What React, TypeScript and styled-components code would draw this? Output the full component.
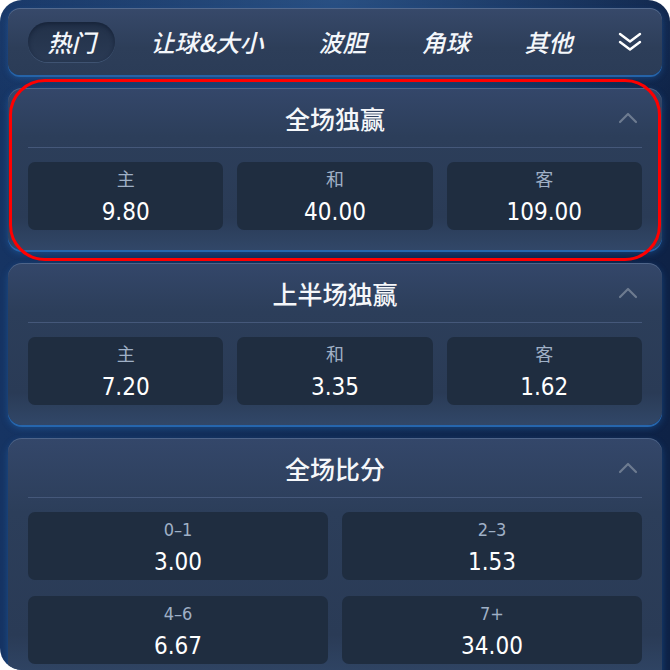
import styled, { createGlobalStyle } from 'styled-components';

const GlobalStyle = createGlobalStyle`
  html, body {
    margin: 0;
    padding: 0;
    background: #ffffff;
  }
  * {
    box-sizing: border-box;
  }
`;

const cjk = `"Noto Sans CJK SC", "Noto Sans", sans-serif`;
const digits = `"DejaVu Sans Condensed", "Liberation Sans Narrow", "Noto Sans", sans-serif`;

type Option = { label: string; value: string };
type Market = { title: string; cols: number; options: Option[] };

const tabs = ['热门', '让球&大小', '波胆', '角球', '其他'];

const markets: Market[] = [
  {
    title: '全场独赢',
    cols: 3,
    options: [
      { label: '主', value: '9.80' },
      { label: '和', value: '40.00' },
      { label: '客', value: '109.00' },
    ],
  },
  {
    title: '上半场独赢',
    cols: 3,
    options: [
      { label: '主', value: '7.20' },
      { label: '和', value: '3.35' },
      { label: '客', value: '1.62' },
    ],
  },
  {
    title: '全场比分',
    cols: 2,
    options: [
      { label: '0–1', value: '3.00' },
      { label: '2–3', value: '1.53' },
      { label: '4–6', value: '6.67' },
      { label: '7+', value: '34.00' },
    ],
  },
];

export default function App() {
  return (
    <>
      <GlobalStyle />
      <Frame>
        <TabBar>
          {tabs.map((t, i) => (
            <Tab key={t} $active={i === 0}>
              {t}
            </Tab>
          ))}
          <MoreButton>
            <svg width="24" height="22" viewBox="0 0 24 22" fill="none">
              <path d="M2 3 L12 10.5 L22 3" stroke="#ffffff" strokeWidth="2.4" strokeLinecap="round" strokeLinejoin="round" />
              <path d="M2 11 L12 18.5 L22 11" stroke="#ffffff" strokeWidth="2.4" strokeLinecap="round" strokeLinejoin="round" />
            </svg>
          </MoreButton>
        </TabBar>

        {markets.map((m) => (
          <Panel key={m.title}>
            <PanelHeader>
              <PanelTitle>{m.title}</PanelTitle>
              <Collapse>
                <svg width="20" height="12" viewBox="0 0 20 12" fill="none">
                  <path d="M2 10 L10 2 L18 10" stroke="#6d7b90" strokeWidth="2.2" strokeLinecap="round" strokeLinejoin="round" />
                </svg>
              </Collapse>
            </PanelHeader>
            <OddsGrid $cols={m.cols}>
              {m.options.map((o) => (
                <OddsCell key={o.label}>
                  <OddsLabel>{o.label}</OddsLabel>
                  <OddsValue>{o.value}</OddsValue>
                </OddsCell>
              ))}
            </OddsGrid>
          </Panel>
        ))}

        <Highlight />
      </Frame>
    </>
  );
}

const Frame = styled.div`
  position: relative;
  width: 670px;
  height: 670px;
  overflow: hidden;
  border-radius: 22px 22px 0 22px;
  padding: 8px;
  display: flex;
  flex-direction: column;
  gap: 13px;
  background:
    radial-gradient(ellipse 60% 30% at 50% 0%, rgba(60, 110, 170, 0.55), rgba(60, 110, 170, 0) 100%),
    linear-gradient(90deg, #163463 0%, #112a52 50%, #0e2246 100%);
`;

const TabBar = styled.nav`
  flex: 0 0 67px;
  display: flex;
  align-items: center;
  gap: 16px;
  padding: 0 20px;
  border-radius: 12px;
  background: linear-gradient(180deg, #37496a 0%, #2d3e59 60%, #2b3c57 100%);
  box-shadow:
    inset 0 1px 0 rgba(140, 170, 210, 0.35),
    0 2px 0 #2563a8,
    0 3px 6px rgba(40, 120, 210, 0.35);
`;

const Tab = styled.div<{ $active?: boolean }>`
  height: 40px;
  display: flex;
  align-items: center;
  padding: 0 19.5px;
  border-radius: 20px;
  font-family: ${cjk};
  font-size: 24px;
  font-weight: 500;
  font-style: italic;
  color: #f4f7fb;
  white-space: nowrap;
  background: ${(p) => (p.$active ? 'linear-gradient(180deg, #223149 0%, #2a3a54 100%)' : 'transparent')};
  box-shadow: ${(p) =>
    p.$active ? 'inset 0 2px 4px rgba(10, 20, 40, 0.5), 0 1px 0 rgba(120, 150, 190, 0.25)' : 'none'};
`;

const MoreButton = styled.div`
  margin-left: auto;
  display: flex;
  align-items: center;
`;

const Panel = styled.section`
  flex: 0 0 auto;
  display: flex;
  flex-direction: column;
  padding: 0 20px 20px;
  border-radius: 14px;
  background: linear-gradient(180deg, #34476a 0%, #2c3e5a 30%, #2a3b56 80%, #314768 100%);
  box-shadow:
    inset 0 1px 0 rgba(140, 170, 210, 0.3),
    0 2px 0 #2666ad,
    0 3px 7px rgba(40, 130, 220, 0.35);
`;

const PanelHeader = styled.header`
  position: relative;
  height: 60px;
  display: flex;
  align-items: center;
  justify-content: center;
  border-bottom: 1px solid #45587a;
`;

const PanelTitle = styled.h2`
  margin: 0;
  font-family: ${cjk};
  font-size: 25px;
  font-weight: 500;
  color: #f5f7fa;
`;

const Collapse = styled.div`
  position: absolute;
  right: 4px;
  top: 24px;
  display: flex;
`;

const OddsGrid = styled.div<{ $cols: number }>`
  margin-top: 14px;
  display: grid;
  grid-template-columns: repeat(${(p) => p.$cols}, 1fr);
  column-gap: 14px;
  row-gap: 16px;
`;

const OddsCell = styled.div`
  height: 68px;
  display: flex;
  flex-direction: column;
  align-items: center;
  justify-content: center;
  gap: 7px;
  padding-top: 2px;
  border-radius: 7px;
  background: #1f2d40;
`;

const OddsLabel = styled.span`
  font-family: ${digits}, ${cjk};
  font-size: 18px;
  line-height: 22px;
  color: #9fb0c6;
`;

const OddsValue = styled.span`
  font-family: ${digits};
  font-size: 24px;
  line-height: 28px;
  color: #ffffff;
`;

const Highlight = styled.div`
  position: absolute;
  left: 9px;
  top: 79px;
  width: 652px;
  height: 182px;
  border: 3px solid #ff0000;
  border-radius: 36px;
  pointer-events: none;
`;
